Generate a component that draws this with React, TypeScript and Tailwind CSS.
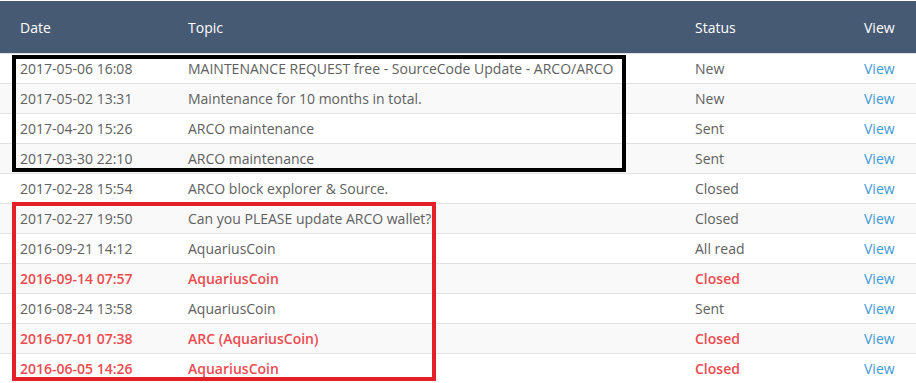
import React from "react";

type Row = { date: string; topic: string; status: string; red?: boolean };

const rows: Row[] = [
  { date: "2017-05-06 16:08", topic: "MAINTENANCE REQUEST free - SourceCode Update - ARCO/ARCO", status: "New" },
  { date: "2017-05-02 13:31", topic: "Maintenance for 10 months in total.", status: "New" },
  { date: "2017-04-20 15:26", topic: "ARCO maintenance", status: "Sent" },
  { date: "2017-03-30 22:10", topic: "ARCO maintenance", status: "Sent" },
  { date: "2017-02-28 15:54", topic: "ARCO block explorer & Source.", status: "Closed" },
  { date: "2017-02-27 19:50", topic: "Can you PLEASE update ARCO wallet?", status: "Closed" },
  { date: "2016-09-21 14:12", topic: "AquariusCoin", status: "All read" },
  { date: "2016-09-14 07:57", topic: "AquariusCoin", status: "Closed", red: true },
  { date: "2016-08-24 13:58", topic: "AquariusCoin", status: "Sent" },
  { date: "2016-07-01 07:38", topic: "ARC (AquariusCoin)", status: "Closed", red: true },
  { date: "2016-06-05 14:26", topic: "AquariusCoin", status: "Closed", red: true },
];

export default function App() {
  return (
    <div
      className="relative w-[916px] h-[383px] overflow-hidden bg-white text-[14px]"
      style={{ fontFamily: '"Open Sans", "Liberation Sans", sans-serif' }}
    >
      <div className="mt-px h-[52px] bg-[#475a74] text-white flex items-center">
        <div className="w-[168px] pl-[20px]">Date</div>
        <div className="w-[507px] pl-[20px]">Topic</div>
        <div className="w-[169px] pl-[20px]">Status</div>
        <div className="w-[72px] pl-[20px]">View</div>
      </div>
      {rows.map((r, i) => (
        <div
          key={i}
          className={`h-[30px] flex items-center border-t border-[#e2e2e2] ${
            i % 2 === 1 ? "bg-[#f9f9f9]" : "bg-white"
          } ${r.red ? "text-[#ec4b4f] font-semibold" : "text-[#606060]"}`}
        >
          <div className="w-[168px] pl-[20px] whitespace-nowrap">{r.date}</div>
          <div className="w-[507px] pl-[20px] whitespace-nowrap">{r.topic}</div>
          <div className="w-[169px] pl-[20px] whitespace-nowrap">{r.status}</div>
          <div className="w-[72px] pl-[20px] text-[#3d9ad8] font-normal">View</div>
        </div>
      ))}
      <div className="absolute left-[12px] top-[55px] w-[614px] h-[117px] border-[4px] border-black pointer-events-none" />
      <div className="absolute left-[12px] top-[202px] w-[424px] h-[179px] border-[4px] border-[#e41f26] pointer-events-none" />
    </div>
  );
}
